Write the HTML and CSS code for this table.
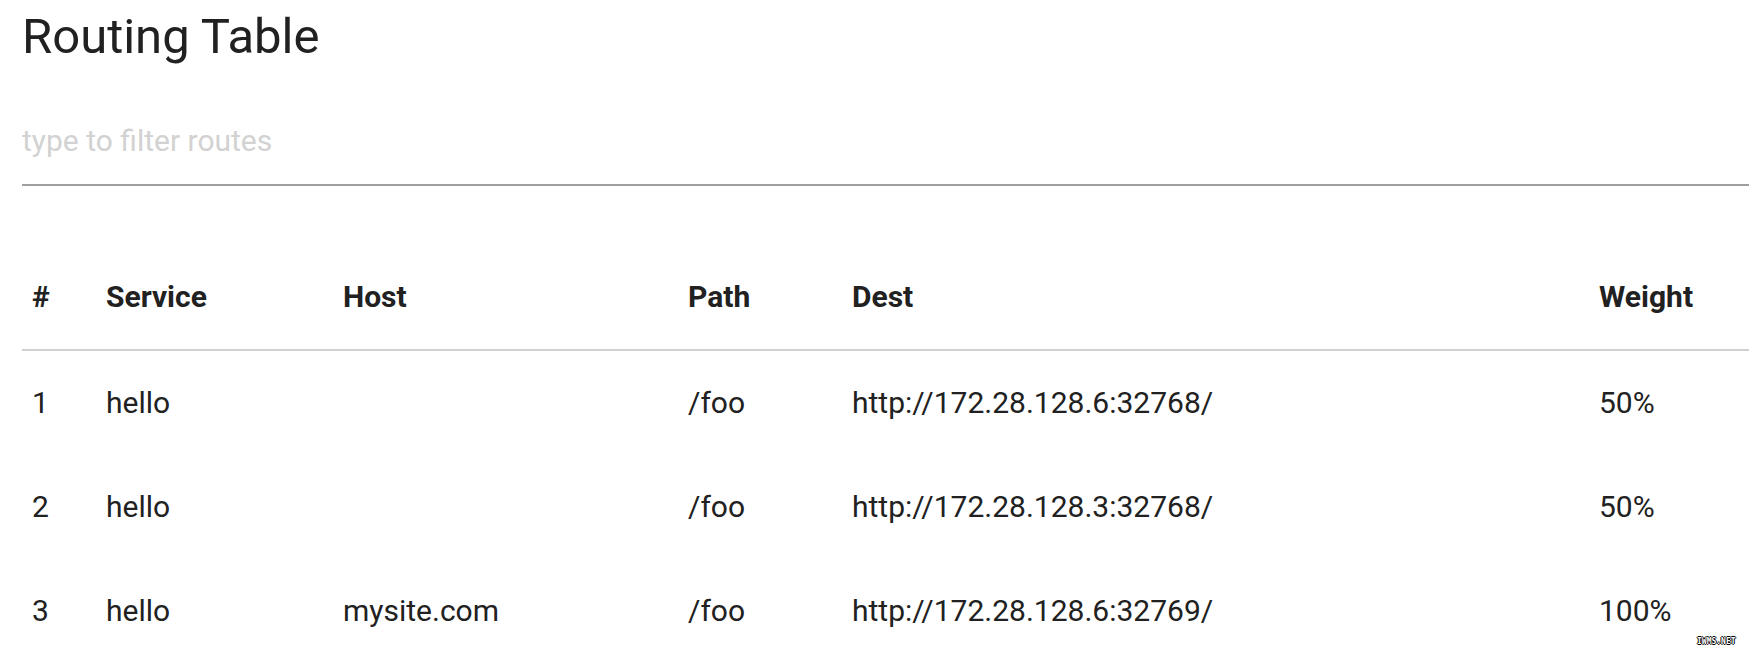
FILE: index.html
```html
<!DOCTYPE html>
<html lang="en">
<head>
<meta charset="utf-8">
<title>Routing Table</title>
<link rel="stylesheet" href="styles.css">
</head>
<body>
<main class="page">
  <h1 class="title">Routing Table</h1>
  <input class="filter" type="text" placeholder="type to filter routes">
  <table class="routes">
    <colgroup>
      <col class="c-num"><col class="c-service"><col class="c-host"><col class="c-path"><col class="c-dest"><col class="c-weight">
    </colgroup>
    <thead>
      <tr><th>#</th><th>Service</th><th>Host</th><th>Path</th><th>Dest</th><th>Weight</th></tr>
    </thead>
    <tbody>
      <tr><td>1</td><td>hello</td><td></td><td>/foo</td><td>http://172.28.128.6:32768/</td><td>50%</td></tr>
      <tr><td>2</td><td>hello</td><td></td><td>/foo</td><td>http://172.28.128.3:32768/</td><td>50%</td></tr>
      <tr><td>3</td><td>hello</td><td>mysite.com</td><td>/foo</td><td>http://172.28.128.6:32769/</td><td>100%</td></tr>
    </tbody>
  </table>
</main>
<div class="watermark">IWMS.NET</div>
</body>
</html>
```

FILE: styles.css
```css
html, body {
  margin: 0;
  padding: 0;
  background: #ffffff;
}
body {
  font-family: Roboto, "Liberation Sans", Arial, sans-serif;
  color: #212121;
  overflow: hidden;
}
.page {
  padding-left: 22px;
}
.title {
  margin: 0;
  padding-top: 9px;
  font-size: 49px;
  font-weight: 400;
  line-height: 56px;
  color: #212121;
}
.filter {
  display: block;
  box-sizing: border-box;
  width: 100%;
  height: 64px;
  margin: 57px 0 0 0;
  padding: 0 0 26px 0;
  border: none;
  border-bottom: 2px solid #9e9e9e;
  outline: none;
  font-family: Roboto, "Liberation Sans", Arial, sans-serif;
  font-size: 30px;
  line-height: 36px;
  color: #212121;
  background: transparent;
}
.filter::placeholder {
  color: #d2d2d2;
}
.routes {
  margin-top: 58px;
  width: 1727px;
  table-layout: fixed;
  border-collapse: collapse;
  font-size: 30px;
}
.c-num { width: 74px; }
.c-service { width: 237px; }
.c-host { width: 345px; }
.c-path { width: 164px; }
.c-dest { width: 747px; }
.c-weight { width: 160px; }
.routes th,
.routes td {
  padding: 0 0 0 10px;
  text-align: left;
  vertical-align: middle;
  white-space: nowrap;
}
.routes th {
  height: 105px;
  font-weight: 700;
  color: #212121;
  border-bottom: 2px solid #d0d0d0;
}
.routes td {
  height: 104px;
  box-sizing: border-box;
  font-weight: 400;
  color: #212121;
}
.watermark {
  position: absolute;
  left: 1697px;
  top: 637px;
  font-family: "DejaVu Sans Mono", monospace;
  font-size: 8px;
  font-weight: 700;
  color: #ffffff;
  text-shadow: 1px 0 0 #000, -1px 0 0 #000, 0 1px 0 #000, 0 -1px 0 #000;
}
```
